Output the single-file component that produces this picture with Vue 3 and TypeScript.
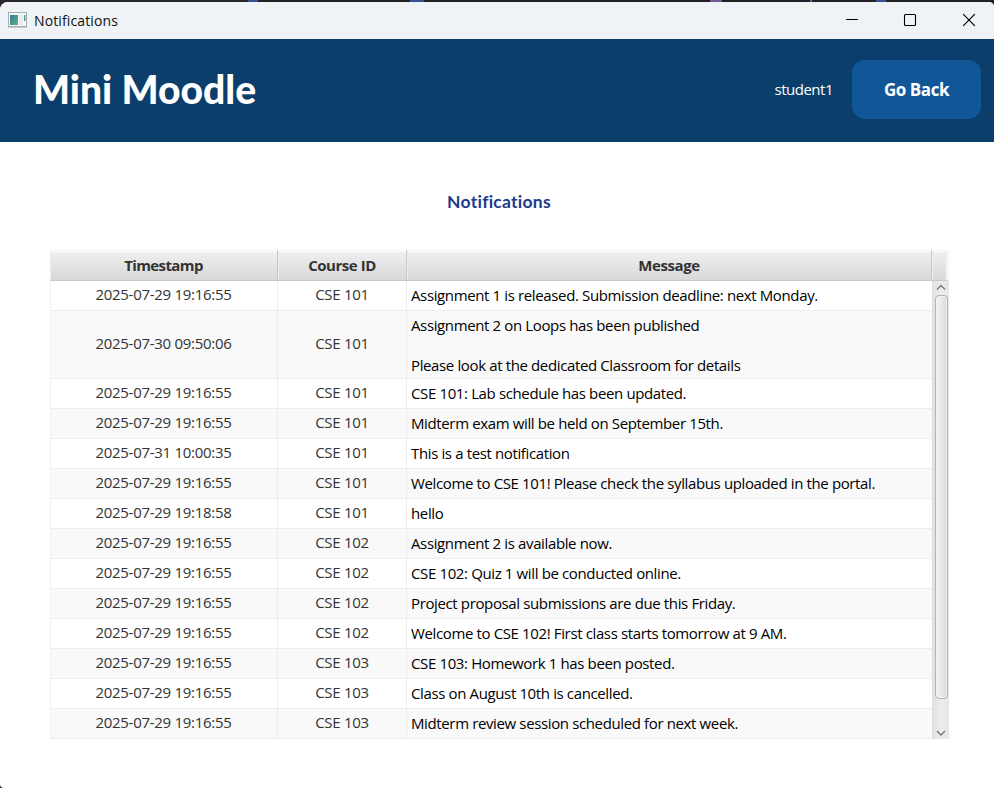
<script setup lang="ts">
interface Notice {
  timestamp: string
  course: string
  message: string
}

const notices: Notice[] = [
  { timestamp: '2025-07-29 19:16:55', course: 'CSE 101', message: 'Assignment 1 is released. Submission deadline: next Monday.' },
  { timestamp: '2025-07-30 09:50:06', course: 'CSE 101', message: 'Assignment 2 on Loops has been published\n\nPlease look at the dedicated Classroom for details' },
  { timestamp: '2025-07-29 19:16:55', course: 'CSE 101', message: 'CSE 101: Lab schedule has been updated.' },
  { timestamp: '2025-07-29 19:16:55', course: 'CSE 101', message: 'Midterm exam will be held on September 15th.' },
  { timestamp: '2025-07-31 10:00:35', course: 'CSE 101', message: 'This is a test notification' },
  { timestamp: '2025-07-29 19:16:55', course: 'CSE 101', message: 'Welcome to CSE 101! Please check the syllabus uploaded in the portal.' },
  { timestamp: '2025-07-29 19:18:58', course: 'CSE 101', message: 'hello' },
  { timestamp: '2025-07-29 19:16:55', course: 'CSE 102', message: 'Assignment 2 is available now.' },
  { timestamp: '2025-07-29 19:16:55', course: 'CSE 102', message: 'CSE 102: Quiz 1 will be conducted online.' },
  { timestamp: '2025-07-29 19:16:55', course: 'CSE 102', message: 'Project proposal submissions are due this Friday.' },
  { timestamp: '2025-07-29 19:16:55', course: 'CSE 102', message: 'Welcome to CSE 102! First class starts tomorrow at 9 AM.' },
  { timestamp: '2025-07-29 19:16:55', course: 'CSE 103', message: 'CSE 103: Homework 1 has been posted.' },
  { timestamp: '2025-07-29 19:16:55', course: 'CSE 103', message: 'Class on August 10th is cancelled.' },
  { timestamp: '2025-07-29 19:16:55', course: 'CSE 103', message: 'Midterm review session scheduled for next week.' },
]
</script>

<template>
  <div class="desktop">
    <div class="window">
      <div class="titlebar">
        <svg class="app-icon" width="19" height="16" viewBox="0 0 19 16">
          <defs>
            <linearGradient id="pane" x1="0" y1="0" x2="1" y2="1">
              <stop offset="0" stop-color="#3c7599" />
              <stop offset="1" stop-color="#59b77c" />
            </linearGradient>
          </defs>
          <rect x="0.5" y="0.5" width="18" height="14" fill="#f5f6f8" stroke="#a5adb7" />
          <path d="M0 15.5H19" stroke="#c5cad0" />
          <rect x="2" y="3" width="8" height="10" fill="url(#pane)" />
          <rect x="11" y="3" width="4" height="10" fill="#e9ecef" />
          <rect x="16" y="3" width="1.5" height="6" fill="#4fa38c" />
        </svg>
        <span class="window-title">Notifications</span>
        <div class="controls">
          <svg width="14" height="14" viewBox="0 0 14 14"><path d="M2 6.5H14" stroke="#000" fill="none" /></svg>
          <svg width="14" height="14" viewBox="0 0 14 14"><rect x="1.5" y="1.5" width="11" height="11" rx="1" stroke="#000" stroke-width="1.1" fill="none" /></svg>
          <svg width="14" height="14" viewBox="0 0 14 14"><path d="M1.2 1.2L12.8 12.8M12.8 1.2L1.2 12.8" stroke="#000" stroke-width="1.2" fill="none" /></svg>
        </div>
      </div>

      <header class="header">
        <h1>Mini Moodle</h1>
        <span class="user">student1</span>
        <button class="back">Go Back</button>
      </header>

      <main>
        <h2>Notifications</h2>
        <div class="table">
          <div class="head">
            <div class="th">Timestamp</div>
            <div class="th">Course ID</div>
            <div class="th">Message</div>
            <div class="th corner"></div>
          </div>
          <div class="content">
            <div class="rows">
              <div v-for="(n, i) in notices" :key="i" class="row">
                <div class="cell centered">{{ n.timestamp }}</div>
                <div class="cell centered">{{ n.course }}</div>
                <div class="cell message">{{ n.message }}</div>
              </div>
            </div>
            <div class="scrollbar">
              <svg width="16" height="14" viewBox="0 0 16 14"><path d="M4 8.5L8 4.5L12 8.5" stroke="#777" stroke-width="1.4" fill="none" /></svg>
              <div class="thumb"></div>
              <svg class="down" width="16" height="14" viewBox="0 0 16 14"><path d="M4 6L8 10L12 6" stroke="#777" stroke-width="1.4" fill="none" /></svg>
            </div>
          </div>
        </div>
      </main>
    </div>
  </div>
</template>

<style>
body {
  margin: 0;
  overflow: hidden;
}
</style>

<style scoped>
.desktop {
  box-sizing: border-box;
  width: 994px;
  height: 788px;
  padding-top: 2px;
  background: linear-gradient(90deg, #29272b 0 248px, #3a4f91 248px 258px, #222126 258px 410px, #3a4f91 410px 424px, #222126 424px 710px, #76569b 710px 722px, #222126 722px 810px, #3c70b2 810px 812px, #222126 812px 876px, #3a4f91 876px 886px, #222126 886px);
  font-family: "Open Sans", "Noto Sans", sans-serif;
}
.window {
  height: 786px;
  overflow: hidden;
  border-radius: 8px 5px 0 4px;
  background: #fff;
}
.titlebar {
  display: flex;
  align-items: center;
  box-sizing: border-box;
  height: 37px;
  padding: 0 18px 0 8px;
  background: #eff3f6;
}
.app-icon {
  margin-bottom: 1px;
}
.window-title {
  margin-left: 7px;
  font-size: 14px;
  letter-spacing: 0.12px;
  color: #111;
}
.controls {
  display: flex;
  gap: 45px;
  margin-left: auto;
  margin-bottom: 1px;
}
.header {
  display: flex;
  align-items: center;
  box-sizing: border-box;
  height: 103px;
  padding: 0 13px 3px 33px;
  background: #0b3e6b;
  color: #fff;
}
h1 {
  margin: 0;
  font: 900 39px/48px Lato, sans-serif;
  letter-spacing: 0;
}
.user {
  margin-left: auto;
  font: 400 15px/20px "Open Sans", sans-serif;
  letter-spacing: -0.5px;
}
.back {
  width: 129px;
  height: 59px;
  margin-left: 19px;
  padding: 2px 0 0;
  border: 0;
  border-radius: 13px;
  background: #115797;
  color: #fff;
  font: 700 17px/20px "Open Sans", sans-serif;
  letter-spacing: -0.45px;
}
main {
  padding: 49px 45px 0 50px;
}
h2 {
  margin: 0 0 37px;
  padding-right: 1px;
  font: 700 17.5px/22px Lato, sans-serif;
  font-variant-ligatures: none;
  letter-spacing: 0.25px;
  color: #1e3a8a;
  text-align: center;
}
.table {
  width: 899px;
}
.head {
  display: grid;
  grid-template-columns: 228px 129px 525px 17px;
  height: 31px;
}
.th {
  display: flex;
  align-items: center;
  justify-content: center;
  box-sizing: border-box;
  border: solid #c8c8c8;
  border-width: 0 1px 1px 0;
  background: linear-gradient(#f0f0f0, #d9d9d9);
  box-shadow: inset 0 1px #f3f3f3, inset 1px 0 #eee, inset 0 2px #fff;
  color: #333;
  font-size: 15px;
  font-weight: 700;
  letter-spacing: -0.6px;
}
.th:nth-child(2) {
  letter-spacing: -0.45px;
}
.th:nth-child(3) {
  letter-spacing: -0.4px;
}
.corner {
  border-right: 3px solid #f5f5f8;
}
.content {
  display: flex;
  height: 458px;
}
.rows {
  width: 882px;
}
.row {
  display: grid;
  grid-template-columns: 228px 129px 525px;
  background: #fff;
}
.row:nth-child(even) {
  background: #f9f9f9;
}
.cell {
  box-sizing: border-box;
  border: solid #ededed;
  border-width: 0 1px 1px 0;
  min-height: 30px;
  font-size: 15px;
  letter-spacing: -0.28px;
  line-height: 20px;
  white-space: pre-wrap;
}
.row .cell:first-child {
  box-shadow: inset 1px 0 #f0f0f0;
}
.centered {
  display: flex;
  align-items: center;
  justify-content: center;
  padding-bottom: 3px;
  color: #333;
}
.message {
  padding: 4px 0 5px 4px;
  border-right: 0;
  color: #000;
  letter-spacing: -0.37px;
}
.row:nth-child(2) .message {
  padding-bottom: 3px;
}
.scrollbar {
  display: flex;
  flex-direction: column;
  align-items: center;
  box-sizing: border-box;
  width: 17px;
  border-left: 1px solid #dfdfdf;
  background: linear-gradient(90deg, #e1e1e1, #ececec 50%, #e6e6e6);
}
.scrollbar svg {
  display: block;
  flex: none;
}
.thumb {
  box-sizing: border-box;
  width: 13px;
  height: 404px;
  border: 1px solid #b2b2b2;
  border-radius: 4px;
  background: linear-gradient(90deg, #f4f4f4, #dadada);
  box-shadow: inset 0 0 0 1px #f2f2f2;
}
.down {
  margin-top: auto;
}
</style>
